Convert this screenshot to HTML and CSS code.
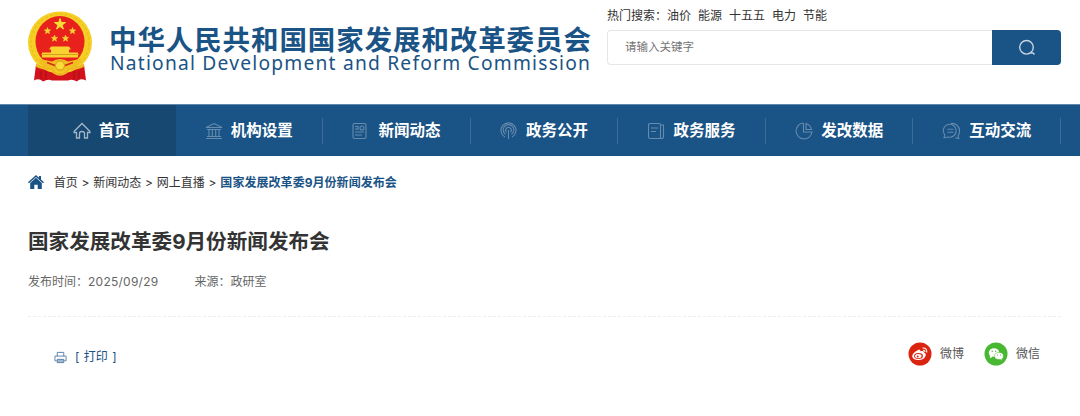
FILE: index.html
```html
<!DOCTYPE html>
<html lang="zh-CN">
<head>
    <meta charset="UTF-8">
    <meta name="viewport" content="width=device-width, initial-scale=1.0">
    <title>国家发展改革委9月份新闻发布会</title>
    <link rel="stylesheet" href="styles.css">
</head>
<body>
    <header class="header">
        <a class="logo" href="#">
            <svg class="emblem" viewBox="0 0 64 70">
                <path d="M8 53L21 55L43 55L56 53L58 69Q52 66 49 70Q44 67 40 69L24 69Q20 67 15 70Q11 66 6 69Z" fill="#d3131b"/>
                <ellipse cx="32" cy="31" rx="32" ry="31" fill="#f5cf24"/>
                <ellipse cx="32" cy="31" rx="29" ry="28.500" fill="none" stroke="#ecbd20" stroke-width="1.200" stroke-dasharray="3 2"/>
                <ellipse cx="32" cy="30" rx="24.500" ry="25.500" fill="#e8211d"/>
                <path d="M32 7l1.300 4h4.200l-3.400 2.500 1.300 4L32 15l-3.400 2.500 1.300-4L26.500 11h4.200z" fill="#f7df35" stroke="#f7df35"/>
                <g fill="#f7d230">
                    <path id="star" d="M19.500 16l.9 2.200 2.300.2-1.800 1.500.6 2.300-2-1.200-2 1.200.6-2.300-1.800-1.500 2.300-.2z" stroke="#f7d230" stroke-width=".5"/>
                    <use href="#star" x="25"/>
                    <use href="#star" x="7" y="7.500"/>
                    <use href="#star" x="18" y="7.500"/>
                    <path d="M23 35h18l2 3h-2v3h9v5H14v-5h9v-3h-2z"/>
                </g>
                <path d="M13 43h38" stroke="#d89d1b" stroke-width="1"/>
                <path d="M10 47L24 50Q32 45 40 50L54 47L48 57L40 55Q32 65 24 55L16 57Z" fill="#f0be20"/>
                <path d="M19 51l8 3M45 51l-8 3" stroke="#d8271b" stroke-width="1.800"/>
                <circle cx="32" cy="54" r="4.500" fill="#f8dc3a" stroke="#d99a19"/>
                <path d="M8 54Q17 58 24 57L26 61Q32 65 38 61L40 57Q47 58 56 54" fill="none" stroke="#efb822" stroke-width="2.500"/>
                <path d="M13 60v8M18 60v8M46 60v8M51 60v8" stroke="#a90f16"/>
            </svg>
            <span class="logo-text">
                <span class="logo-cn">中华人民共和国国家发展和改革委员会</span>
                <span class="logo-en">National Development and Reform Commission</span>
            </span>
        </a>
        <div class="search">
            <div class="hot">热门搜索：<a href="#">油价</a><a href="#">能源</a><a href="#">十五五</a><a href="#">电力</a><a href="#">节能</a></div>
            <form class="search-form">
                <input type="text" placeholder="请输入关键字">
                <button type="button" aria-label="搜索">
                    <svg viewBox="0 0 18 18"><circle cx="8.500" cy="8.300" r="6.800"/><path d="M12.500 14h2.500l1.500 1.500"/></svg>
                </button>
            </form>
        </div>
    </header>

    <nav class="nav">
        <ul>
            <li class="active"><a href="#">
                <svg viewBox="0 0 18 18"><path d="M1 9.500L9 1.500l8 8M1 9.500v1h2.500V16h3v-4.500q0-2 2.500-2t2.500 2V16h3v-5.500H17v-1"/></svg>首页</a></li>
            <li><a href="#">
                <svg viewBox="0 0 18 18"><path d="M1 5.500L9 1.500l8 4zM2 7.500h14M4 8v6M7.300 8v6M10.700 8v6M14 8v6M2 14.500h14M1 16.500h16"/></svg>机构设置</a></li>
            <li><a href="#">
                <svg viewBox="0 0 18 18"><rect x="1" y="1.500" width="13" height="15" rx="1.500"/><circle cx="10" cy="6" r="2"/><path d="M3 4.500h3M3 7h3M3 10h9M3 13h7M6 4v4"/></svg>新闻动态</a></li>
            <li><a href="#">
                <svg viewBox="0 0 18 18"><path d="M5 15a7.500 7.500 0 1 1 7 0M5.500 12.300a5.300 5.300 0 1 1 6 0M6.500 10.200a2.800 2.800 0 1 1 4 0M8.500 8v9"/></svg>政务公开</a></li>
            <li><a href="#">
                <svg viewBox="0 0 18 18"><rect x=".5" y="1.500" width="12" height="15" rx="1.500"/><path d="M12.500 3h3v11.500q0 2-2 2H10M3 6h7M3 9.500h5"/></svg>政务服务</a></li>
            <li><a href="#">
                <svg viewBox="0 0 18 18"><path d="M8 1a8 8 0 1 0 9 9H8.500V1M11 1.500A8 8 0 0 1 16.500 7.500H11z"/></svg>发改数据</a></li>
            <li><a href="#">
                <svg class="chat" viewBox="0 0 19 18"><path d="M2 15.800l.8-2.800A6.500 6.500 0 1 1 6 15zM9 1.500a7.400 7.400 0 0 1 8.500 7.500q0 3-1.500 5l.8 2.500-3.600-.8M5.500 7.300h6M5.500 10.300h6"/></svg>互动交流</a></li>
        </ul>
    </nav>

    <main class="main">
        <div class="crumbs">
            <svg viewBox="0 0 16 14"><path d="M8 0l3 2.700V1h2v3.500L16 7.300l-1 1-7-6.200-7 6.200-1-1zM8 2.800l5.800 5.200V14H9.700V9.800H6.300V14H2.200V8z"/></svg>
            <a href="#">首页</a> &gt; <a href="#">新闻动态</a> &gt; <a href="#">网上直播</a> &gt; <strong>国家发展改革委9月份新闻发布会</strong>
        </div>
        <h1>国家发展改革委9月份新闻发布会</h1>
        <div class="meta">
            <span>发布时间：<time>2025/09/29</time></span>
            <span>来源：政研室</span>
        </div>
        <div class="tools">
            <a class="print" href="#">
                <svg viewBox="0 0 14 13"><path d="M3.500 5V1h7v4M3 10H1V5h12v5h-2" fill="none"/><path class="paper" d="M3.500 8.500h7V12h-7z"/></svg>
                [ 打印 ]
            </a>
            <div class="share">
                <a href="#">
                    <svg viewBox="0 0 24 24">
                        <circle cx="12" cy="12" r="11.500" fill="#db2410"/>
                        <path d="M10 8q2-1.500 2.500 1.200 4-1 3.500 1.300 2.500 1 1.500 3.500-1.500 4-7 4-6-.2-6.300-3.800Q4.500 11 10 8z" fill="#fff"/>
                        <ellipse cx="10.500" cy="14" rx="4.500" ry="3" fill="#db2410"/>
                        <ellipse cx="10.300" cy="14.100" rx="3.300" ry="2.200" fill="#fff"/>
                        <circle cx="9.700" cy="14.500" r="1" fill="#db2410"/>
                        <path d="M14.500 6q4.500-.5 4.300 4.500M15 8.200q2-.2 1.900 1.800" fill="none" stroke="#fff" stroke-width="1.100"/>
                    </svg>微博</a>
                <a href="#">
                    <svg viewBox="0 0 24 24">
                        <circle cx="12" cy="12" r="11.500" fill="#48b833"/>
                        <path d="M5.500 12.500l.7 3.700 2.500-1.500z" fill="#fff"/>
                        <ellipse cx="10" cy="10.500" rx="5.200" ry="4.300" fill="#fff"/>
                        <path d="M17.500 16l.5 2.500-2.100-1.400z" fill="#fff"/>
                        <ellipse cx="15" cy="14" rx="4.400" ry="3.600" fill="#fff" stroke="#48b833" stroke-width=".5"/>
                        <g fill="#48b833"><circle cx="8.200" cy="9.300" r=".7"/><circle cx="11.700" cy="9.300" r=".7"/><circle cx="13.600" cy="13" r=".6"/><circle cx="16.500" cy="13" r=".6"/></g>
                    </svg>微信</a>
            </div>
        </div>
    </main>
</body>
</html>
```
FILE: styles.css
```css
* {
    box-sizing: border-box;
}
body {
    margin: 0;
    background-color: #fff;
    font-family: Inter, "Noto Sans CJK SC", sans-serif;
    font-size: 12px;
    color: #333;
}
a {
    color: inherit;
    text-decoration: none;
}
.header {
    display: flex;
    height: 104px;
    padding: 0 19px 0 28px;
}
.logo {
    display: flex;
    width: 579px;
    padding-top: 11px;
    color: #1a5385;
}
.emblem {
    width: 64px;
    height: 71px;
    margin-right: 17px;
}
.logo-text {
    display: flex;
    flex-direction: column;
    padding-top: 14px;
    white-space: nowrap;
}
.logo-cn {
    height: 27px;
    line-height: 27px;
    font-family: "Noto Sans CJK SC", sans-serif;
    font-size: 27.500px;
    font-weight: bold;
    letter-spacing: 0.900px;
}
.logo-en {
    padding-left: 1px;
    line-height: 21px;
    font-family: "Noto Sans", sans-serif;
    font-size: 19.200px;
    letter-spacing: 1.220px;
}
.search {
    flex: 1;
    padding-top: 6px;
}
.hot {
    height: 24px;
    line-height: 19px;
}
.hot a {
    margin-right: 7px;
}
.search-form {
    display: flex;
    height: 35px;
}
.search-form input {
    flex: 1;
    min-width: 0;
    padding: 0 17px 1px;
    border: 1px solid #e6e6e6;
    border-right: none;
    border-radius: 4px 0 0 4px;
    font: inherit;
    font-size: 11.500px;
}
.search-form input::placeholder {
    color: #757575;
}
.search-form button {
    display: flex;
    align-items: center;
    justify-content: center;
    width: 69px;
    padding: 0;
    border: none;
    border-radius: 0 4px 4px 0;
    background-color: #1a5385;
}
.search-form svg {
    width: 18px;
    height: 18px;
    fill: none;
    stroke: #c6d5e2;
    stroke-width: 1.4;
}
.nav {
    height: 52px;
    padding: 0 19px 0 28px;
    border-top: 1px solid #6189ad;
    background-color: #1a5385;
}
.nav ul {
    display: flex;
    height: 100%;
    margin: 0;
    padding: 0;
    list-style: none;
}
.nav li {
    display: flex;
    flex: 1;
    align-items: center;
}
.nav a {
    display: flex;
    flex: 1;
    align-items: center;
    justify-content: center;
    height: 26px;
    border-right: 1px solid #3b6c97;
    color: #fff;
    font-size: 15.500px;
    font-weight: bold;
    line-height: 22px;
}
.nav .active {
    background-color: #174872;
}
.nav .active a {
    border-color: transparent;
}
.nav svg {
    width: 18px;
    height: 18px;
    margin-right: 8px;
    fill: none;
    stroke: #668bae;
    stroke-width: 1.1;
}
.nav .chat {
    width: 19px;
}
.nav .active svg {
    stroke: #a3b6c8;
    stroke-width: 1.3;
}
.main {
    padding: 0 19px 0 28px;
}
.crumbs {
    height: 52px;
    line-height: 53px;
    white-space: nowrap;
    word-spacing: 0.400px;
}
.crumbs svg {
    width: 16px;
    height: 14px;
    margin-right: 6px;
    vertical-align: -2px;
    fill: #1a5385;
}
.crumbs strong {
    color: #1a5385;
    letter-spacing: 0.050px;
}
h1 {
    height: 60px;
    margin: 0;
    padding-top: 18px;
    line-height: 31px;
    font-size: 20.600px;
}
.meta {
    display: flex;
    gap: 36px;
    height: 49px;
    line-height: 27px;
    border-bottom: 1px dashed #eee;
    color: #666;
}
.meta time {
    letter-spacing: 0.250px;
}
.tools {
    display: flex;
    justify-content: space-between;
    padding: 25px 21px 0 26px;
}
.print {
    display: flex;
    align-items: center;
    height: 30px;
    color: #1a5385;
    line-height: 16px;
    word-spacing: 1px;
}
.print svg {
    width: 13px;
    height: 13px;
    margin-right: 8px;
    stroke: #557da4;
    stroke-width: 1;
}
.print .paper {
    fill: #a4bad0;
}
.share {
    display: flex;
    gap: 20px;
    color: #555;
}
.share a {
    display: flex;
    align-items: center;
    height: 24px;
    line-height: 16px;
}
.share svg {
    width: 24px;
    height: 24px;
    margin-right: 8px;
}
```
